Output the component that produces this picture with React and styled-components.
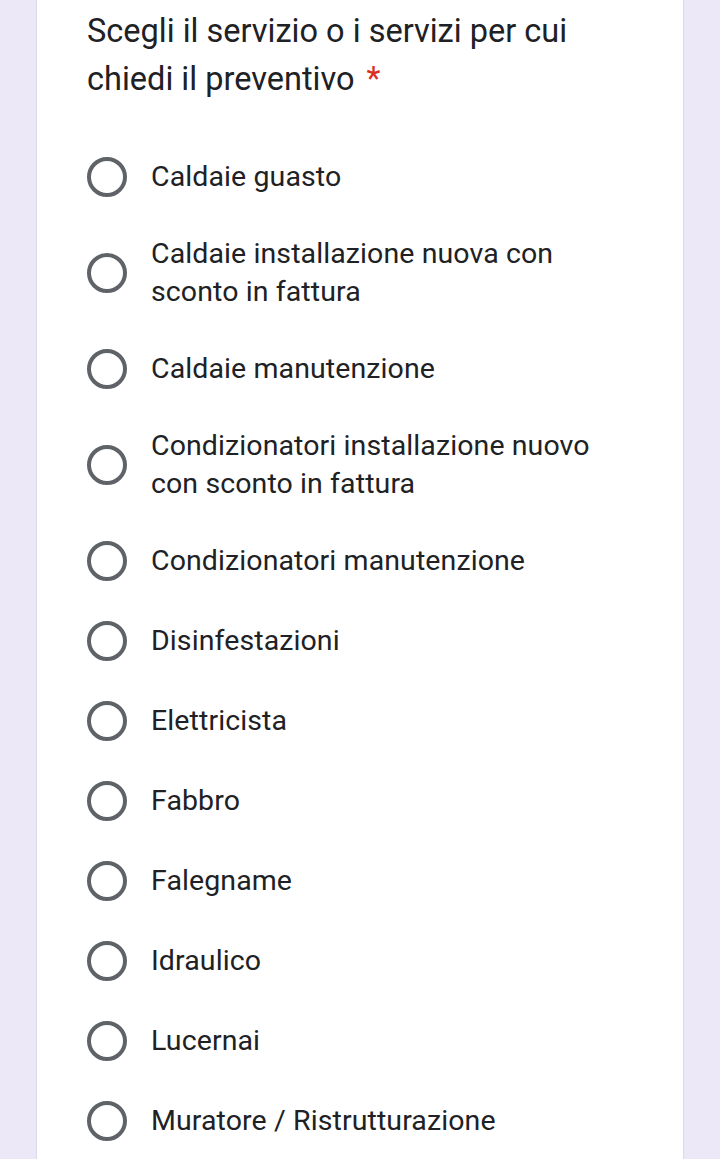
import React from "react";
import styled, { createGlobalStyle } from "styled-components";

const Global = createGlobalStyle`
  html, body { margin: 0; padding: 0; background: #ece8f7; }
  body { font-family: Roboto, "Noto Sans", Arial, sans-serif; }
`;

const Page = styled.div`
  min-height: 1159px;
  background: #ece8f7;
  display: flex;
  justify-content: flex-start;
  padding-left: 36px;
  box-sizing: border-box;
`;

const Card = styled.div`
  width: 648px;
  min-height: 1159px;
  box-sizing: border-box;
  background: #ffffff;
  border-left: 1px solid #dcd9e6;
  border-right: 1px solid #dcd9e6;
  padding: 8px 40px 15px 50px;
`;

const Title = styled.h1`
  margin: 0;
  font-family: Roboto, Arial, sans-serif;
  font-weight: 400;
  font-size: 32.5px;
  line-height: 47.5px;
  color: #202124;
  letter-spacing: 0;
`;

const Required = styled.span`
  color: #d93025;
  margin-left: 12px;
`;

const Options = styled.div`
  margin-top: 52px;
  display: flex;
  flex-direction: column;
  gap: 36px;
`;

const Row = styled.label`
  display: flex;
  align-items: center;
  gap: 24px;
  cursor: pointer;
`;

const RadioBox = styled.span`
  flex: 0 0 40px;
  width: 40px;
  height: 44px;
  display: flex;
  align-items: center;
  justify-content: center;
`;

const Circle = styled.span`
  width: 40px;
  height: 40px;
  box-sizing: border-box;
  border: 4px solid #5f6368;
  border-radius: 50%;
`;

const Label = styled.span`
  font-family: Roboto, Arial, sans-serif;
  font-size: 28.5px;
  line-height: 38px;
  color: #202124;
  letter-spacing: 0.1px;
`;

const options = [
  "Caldaie guasto",
  ["Caldaie installazione nuova con", "sconto in fattura"],
  "Caldaie manutenzione",
  ["Condizionatori installazione nuovo", "con sconto in fattura"],
  "Condizionatori manutenzione",
  "Disinfestazioni",
  "Elettricista",
  "Fabbro",
  "Falegname",
  "Idraulico",
  "Lucernai",
  "Muratore / Ristrutturazione",
];

export default function App() {
  return (
    <>
      <Global />
      <Page>
        <Card>
          <Title>
            Scegli il servizio o i servizi per cui
            <br />
            chiedi il preventivo<Required>*</Required>
          </Title>
          <Options>
            {options.map((o, i) => (
              <Row key={i}>
                <RadioBox>
                  <Circle />
                </RadioBox>
                <Label>
                  {Array.isArray(o) ? (
                    <>
                      {o[0]}
                      <br />
                      {o[1]}
                    </>
                  ) : (
                    o
                  )}
                </Label>
              </Row>
            ))}
          </Options>
        </Card>
      </Page>
    </>
  );
}
